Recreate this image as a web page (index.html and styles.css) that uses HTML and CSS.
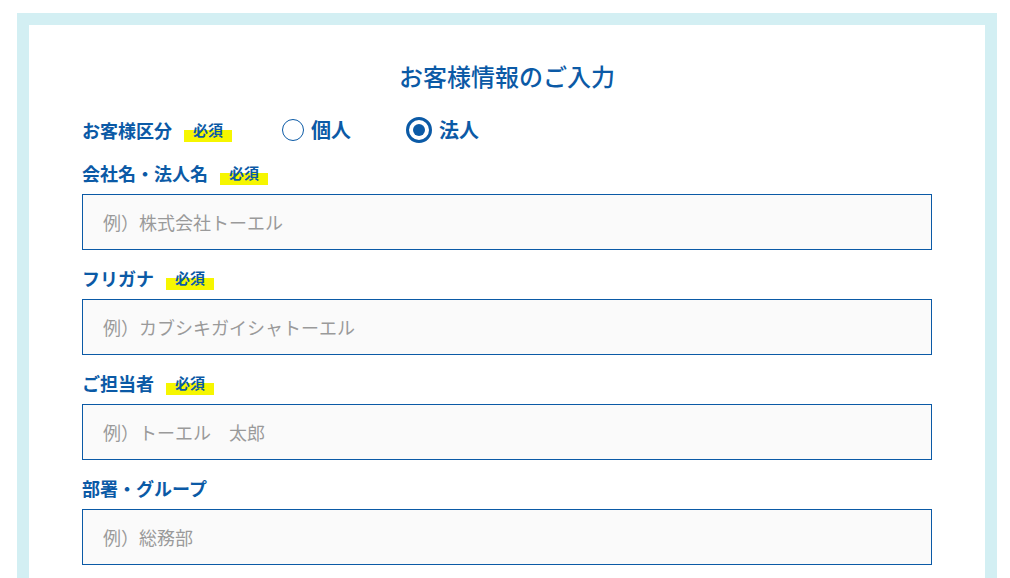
FILE: index.html
```html
<!DOCTYPE html>
<html lang="ja">
<head>
<meta charset="utf-8">
<title>お客様情報のご入力</title>
<link rel="stylesheet" href="styles.css">
</head>
<body>
<div class="frame">
  <div class="panel">
    <h1 class="title">お客様情報のご入力</h1>

    <div class="row-type">
      <div class="label">お客様区分<span class="req">必須</span></div>
      <div class="radios">
        <label class="radio"><span class="dot"></span><span class="rtext">個人</span></label>
        <label class="radio checked"><span class="dot"></span><span class="rtext">法人</span></label>
      </div>
    </div>

    <div class="field">
      <div class="label">会社名・法人名<span class="req">必須</span></div>
      <input class="input" type="text" placeholder="例）株式会社トーエル">
    </div>

    <div class="field">
      <div class="label">フリガナ<span class="req">必須</span></div>
      <input class="input" type="text" placeholder="例）カブシキガイシャトーエル">
    </div>

    <div class="field">
      <div class="label">ご担当者<span class="req">必須</span></div>
      <input class="input" type="text" placeholder="例）トーエル　太郎">
    </div>

    <div class="field">
      <div class="label">部署・グループ</div>
      <input class="input" type="text" placeholder="例）総務部">
    </div>
  </div>
</div>
</body>
</html>
```

FILE: styles.css
```css
html, body {
  margin: 0;
  padding: 0;
  background: #ffffff;
  font-family: "Noto Sans CJK JP", "Noto Sans", sans-serif;
  overflow: hidden;
}

.frame {
  margin: 13px 13px 0 17px;
  background: #d3eff3;
  padding: 12px 12px 0 12px;
}

.panel {
  background: #ffffff;
  padding: 35px 53px 40px 53px;
  display: flex;
  flex-direction: column;
}

.title {
  margin: 0 0 23px 0;
  text-align: center;
  font-size: 24px;
  line-height: 32px;
  font-weight: 500;
  color: #0b5aa6;
}

.label {
  display: flex;
  align-items: center;
  font-size: 18px;
  line-height: 24px;
  font-weight: 700;
  color: #0b5aa6;
}

.req {
  margin-left: 12px;
  padding: 0 9px;
  font-size: 15px;
  line-height: 24px;
  font-weight: 700;
  color: #0b5aa6;
  background: linear-gradient(to bottom, transparent 50%, #f6f600 50%);
}

.row-type {
  display: flex;
  align-items: center;
  height: 30px;
  margin-bottom: 16px;
}

.radios {
  display: flex;
  align-items: center;
  margin-left: 50px;
  gap: 55px;
}

.radio {
  display: flex;
  align-items: center;
  gap: 7px;
}

.dot {
  box-sizing: border-box;
  width: 22px;
  height: 22px;
  border: 1.5px solid #0b5aa6;
  border-radius: 50%;
  background: #fff;
  display: flex;
  align-items: center;
  justify-content: center;
}

.radio.checked .dot {
  width: 26px;
  height: 26px;
  border: 3px solid #0b5aa6;
}

.radio.checked .dot::after {
  content: "";
  width: 12px;
  height: 12px;
  border-radius: 50%;
  background: #0b5aa6;
}

.rtext {
  font-size: 20px;
  line-height: 28px;
  font-weight: 700;
  color: #0b5aa6;
}

.field {
  display: flex;
  flex-direction: column;
  gap: 9px;
  margin-bottom: 16px;
}

.input {
  box-sizing: border-box;
  width: 100%;
  height: 56px;
  margin: 0;
  padding: 0 20px;
  border: 1px solid #0b5aa6;
  border-radius: 0;
  background: #fafafa;
  font-family: "Noto Sans CJK JP", "Noto Sans", sans-serif;
  font-size: 18px;
  color: #333;
  outline: none;
}

.input::placeholder {
  color: #9a9a9a;
  opacity: 1;
}
```
